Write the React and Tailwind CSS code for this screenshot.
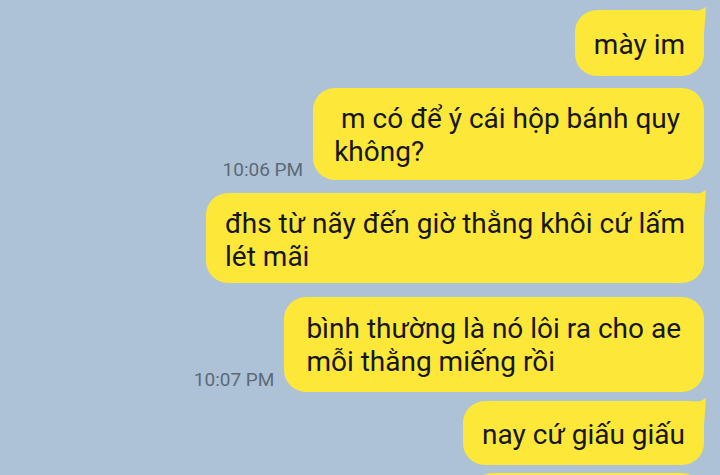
import React from "react";

function Horn() {
  return (
    <svg
      className="absolute right-[-3px] top-[-3px] overflow-visible"
      width="27"
      height="27"
      viewBox="0 0 27 27"
    >
      <path d="M0 3 L12 3 Q19 5 26 0 L24 27 L0 27 Z" fill="#fde83a" />
    </svg>
  );
}

function Bubble({ children, horn, className = "" }) {
  return (
    <div
      className={
        "relative rounded-[22px] bg-[#fde83a] text-[28px] leading-[33px] text-[#161616] whitespace-nowrap " +
        className
      }
    >
      {horn && <Horn />}
      <span className="relative">{children}</span>
    </div>
  );
}

function Time({ children, className = "" }) {
  return (
    <div className={"text-[19px] leading-[20px] text-[#5d6a78] whitespace-nowrap " + className}>
      {children}
    </div>
  );
}

export default function App() {
  return (
    <div
      className="flex h-[475px] w-[720px] flex-col items-end overflow-hidden bg-[#adc2d6] pr-[16px] pt-[10px]"
      style={{ fontFamily: "Roboto, 'Noto Sans', sans-serif" }}
    >
      <div className="flex items-end justify-end gap-[10px]">
        <Bubble horn className="px-[19px] pt-[18px] pb-[15px]">mày im</Bubble>
      </div>
      <div className="mt-[12px] flex items-end justify-end gap-[10px]">
        <Time>10:06 PM</Time>
        <Bubble className="pl-[21px] pr-[24px] pt-[14px] pb-[12px]">
          &nbsp;m có để ý cái hộp bánh quy
          <br />
          không?
        </Bubble>
      </div>
      <div className="mt-[13px] flex items-end justify-end gap-[10px]">
        <Bubble horn className="px-[19px] pt-[14px] pb-[10px]">
          đhs từ nãy đến giờ thằng khôi cứ lấm
          <br />
          lét mãi
        </Bubble>
      </div>
      <div className="mt-[14px] flex items-end justify-end gap-[10px]">
        <Time className="mb-[2px]">10:07 PM</Time>
        <Bubble className="pl-[22px] pr-[23px] pt-[15px] pb-[14px]">
          bình thường là nó lôi ra cho ae
          <br />
          mỗi thằng miếng rồi
        </Bubble>
      </div>
      <div className="mt-[9px] flex items-end justify-end gap-[10px]">
        <Bubble horn className="px-[19px] pt-[17px] pb-[14px]">nay cứ giấu giấu</Bubble>
      </div>
      <div className="mt-[8px] flex items-end justify-end">
        <div className="h-[60px] w-[233px] rounded-[22px] bg-[#fde83a]" />
      </div>
    </div>
  );
}
